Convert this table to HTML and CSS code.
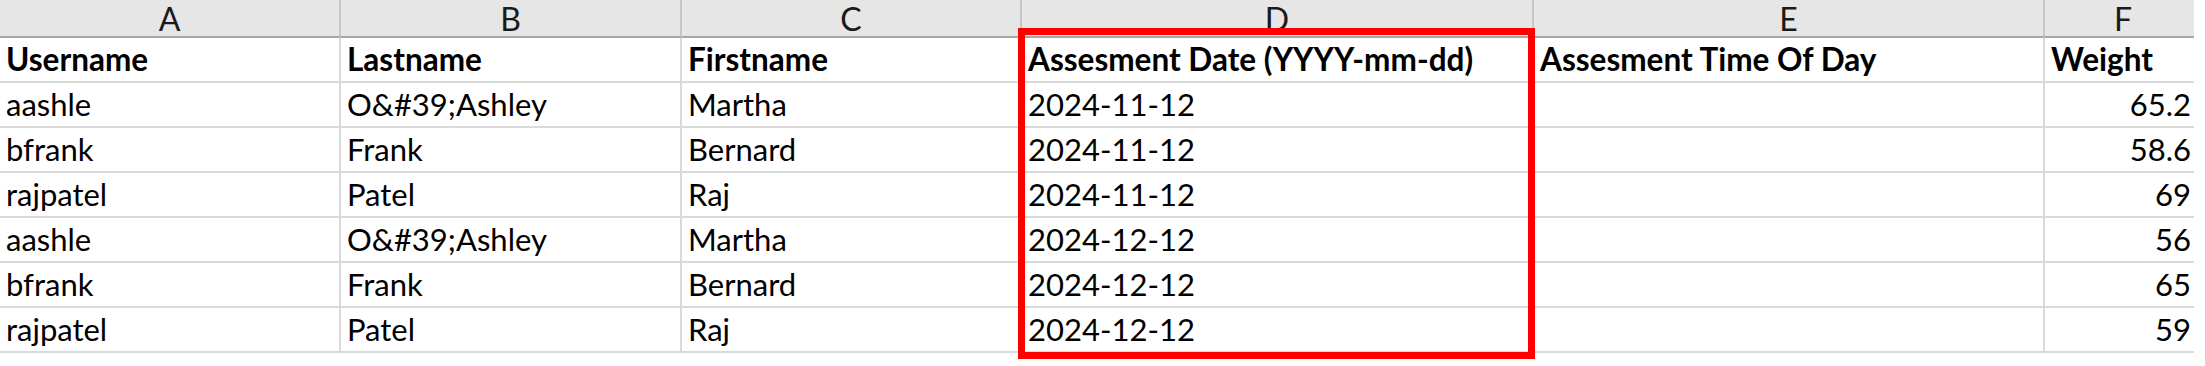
FILE: index.html
```html
<!DOCTYPE html>
<html>
<head>
<meta charset="utf-8">
<link rel="stylesheet" href="styles.css">
</head>
<body>
<div class="sheet">
  <div class="grid">
    <div class="ch">A</div><div class="ch">B</div><div class="ch">C</div><div class="ch">D</div><div class="ch">E</div><div class="ch">F</div>

    <div class="c b">Username</div><div class="c b">Lastname</div><div class="c b">Firstname</div><div class="c b">Assesment Date (YYYY-mm-dd)</div><div class="c b">Assesment Time Of Day</div><div class="c b">Weight</div>

    <div class="c">aashle</div><div class="c">O&amp;#39;Ashley</div><div class="c">Martha</div><div class="c">2024-11-12</div><div class="c"></div><div class="c n">65.2</div>
    <div class="c">bfrank</div><div class="c">Frank</div><div class="c">Bernard</div><div class="c">2024-11-12</div><div class="c"></div><div class="c n">58.6</div>
    <div class="c">rajpatel</div><div class="c">Patel</div><div class="c">Raj</div><div class="c">2024-11-12</div><div class="c"></div><div class="c n">69</div>
    <div class="c">aashle</div><div class="c">O&amp;#39;Ashley</div><div class="c">Martha</div><div class="c">2024-12-12</div><div class="c"></div><div class="c n">56</div>
    <div class="c">bfrank</div><div class="c">Frank</div><div class="c">Bernard</div><div class="c">2024-12-12</div><div class="c"></div><div class="c n">65</div>
    <div class="c">rajpatel</div><div class="c">Patel</div><div class="c">Raj</div><div class="c">2024-12-12</div><div class="c"></div><div class="c n">59</div>
  </div>
  <div class="highlight"></div>
</div>
</body>
</html>
```

FILE: styles.css
```css
html, body {
  margin: 0;
  padding: 0;
  background: #ffffff;
}

.sheet {
  position: relative;
  width: 2194px;
  height: 366px;
  overflow: hidden;
}

.grid {
  display: grid;
  grid-template-columns: 341px 341px 340px 512px 511px 158px;
  grid-template-rows: 38px repeat(7, 45px);
  width: 2203px;
  font-family: "Lato", "Open Sans", sans-serif;
  color: #000;
}

.ch {
  box-sizing: border-box;
  background: #e6e6e6;
  border-right: 2px solid #c6c6c6;
  border-bottom: 2px solid #a6a6a6;
  display: flex;
  align-items: center;
  justify-content: center;
  font-size: 32px;
  line-height: 1;
  color: #1a1a1a;
  padding-top: 1px;
}

.c {
  box-sizing: border-box;
  border-right: 2px solid #dadada;
  border-bottom: 2px solid #dadada;
  display: flex;
  align-items: flex-end;
  padding: 0 6px 6px 6px;
  font-size: 31px;
  line-height: 1;
  white-space: nowrap;
}

.c.b {
  font-weight: bold;
  font-size: 31.5px;
}

.c.n {
  justify-content: flex-end;
  padding-right: 10px;
}

.highlight {
  position: absolute;
  left: 1018px;
  top: 28px;
  width: 517px;
  height: 331px;
  box-sizing: border-box;
  border: 7px solid #ff0000;
}
```
